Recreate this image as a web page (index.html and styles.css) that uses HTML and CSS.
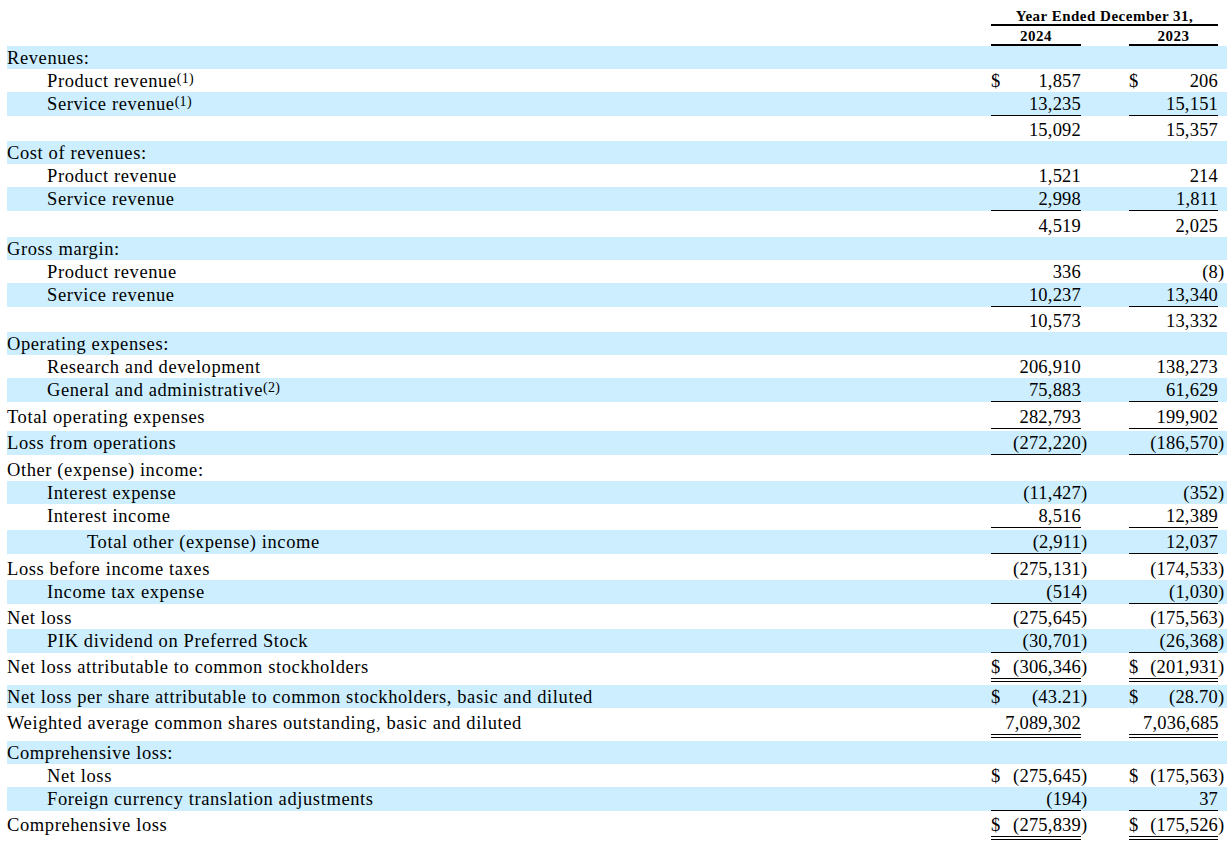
FILE: index.html
```html
<!DOCTYPE html>
<html lang="en">
<head>
<meta charset="utf-8">
<title>Statements of Operations and Comprehensive Loss</title>
<link rel="stylesheet" href="styles.css">
</head>
<body>
<table class="fin">
  <colgroup>
    <col class="c-label">
    <col class="c-dol">
    <col class="c-num1">
    <col class="c-par">
    <col class="c-gap">
    <col class="c-dol">
    <col class="c-num2">
    <col class="c-par2">
  </colgroup>
  <thead>
    <tr class="h1">
      <td></td>
      <td colspan="6" class="hd hd-top">Year Ended December 31,</td>
      <td></td>
    </tr>
    <tr class="h2">
      <td></td>
      <td colspan="2" class="hd hd-yr">2024</td>
      <td></td>
      <td></td>
      <td colspan="2" class="hd hd-yr">2023</td>
      <td></td>
    </tr>
  </thead>
  <tbody>
    <tr class="b"><td class="l0">Revenues:</td><td class="d"></td><td class="n"></td><td class="p"></td><td></td><td class="d"></td><td class="n"></td><td class="p"></td></tr>
    <tr><td class="l1">Product revenue<span class="fn">(1)</span></td><td class="d">$</td><td class="n">1,857</td><td class="p"></td><td></td><td class="d">$</td><td class="n">206</td><td class="p"></td></tr>
    <tr class="b ul"><td class="l1">Service revenue<span class="fn">(1)</span></td><td class="d"></td><td class="n">13,235</td><td class="p"></td><td></td><td class="d"></td><td class="n">15,151</td><td class="p"></td></tr>
    <tr class="sp2"><td class="l0"></td><td class="d"></td><td class="n">15,092</td><td class="p"></td><td></td><td class="d"></td><td class="n">15,357</td><td class="p"></td></tr>

    <tr class="b"><td class="l0">Cost of revenues:</td><td class="d"></td><td class="n"></td><td class="p"></td><td></td><td class="d"></td><td class="n"></td><td class="p"></td></tr>
    <tr><td class="l1">Product revenue</td><td class="d"></td><td class="n">1,521</td><td class="p"></td><td></td><td class="d"></td><td class="n">214</td><td class="p"></td></tr>
    <tr class="b ul"><td class="l1">Service revenue</td><td class="d"></td><td class="n">2,998</td><td class="p"></td><td></td><td class="d"></td><td class="n">1,811</td><td class="p"></td></tr>
    <tr class="sp3"><td class="l0"></td><td class="d"></td><td class="n">4,519</td><td class="p"></td><td></td><td class="d"></td><td class="n">2,025</td><td class="p"></td></tr>

    <tr class="b"><td class="l0">Gross margin:</td><td class="d"></td><td class="n"></td><td class="p"></td><td></td><td class="d"></td><td class="n"></td><td class="p"></td></tr>
    <tr><td class="l1">Product revenue</td><td class="d"></td><td class="n">336</td><td class="p"></td><td></td><td class="d"></td><td class="n">(8</td><td class="p">)</td></tr>
    <tr class="b ul"><td class="l1">Service revenue</td><td class="d"></td><td class="n">10,237</td><td class="p"></td><td></td><td class="d"></td><td class="n">13,340</td><td class="p"></td></tr>
    <tr class="sp2"><td class="l0"></td><td class="d"></td><td class="n">10,573</td><td class="p"></td><td></td><td class="d"></td><td class="n">13,332</td><td class="p"></td></tr>

    <tr class="b"><td class="l0">Operating expenses:</td><td class="d"></td><td class="n"></td><td class="p"></td><td></td><td class="d"></td><td class="n"></td><td class="p"></td></tr>
    <tr><td class="l1">Research and development</td><td class="d"></td><td class="n">206,910</td><td class="p"></td><td></td><td class="d"></td><td class="n">138,273</td><td class="p"></td></tr>
    <tr class="b ul"><td class="l1">General and administrative<span class="fn">(2)</span></td><td class="d"></td><td class="n">75,883</td><td class="p"></td><td></td><td class="d"></td><td class="n">61,629</td><td class="p"></td></tr>
    <tr class="sp3 ul"><td class="l0">Total operating expenses</td><td class="d"></td><td class="n">282,793</td><td class="p"></td><td></td><td class="d"></td><td class="n">199,902</td><td class="p"></td></tr>
    <tr class="b sp2 ul"><td class="l0">Loss from operations</td><td class="d"></td><td class="n">(272,220</td><td class="p">)</td><td></td><td class="d"></td><td class="n">(186,570</td><td class="p">)</td></tr>

    <tr class="sp3"><td class="l0">Other (expense) income:</td><td class="d"></td><td class="n"></td><td class="p"></td><td></td><td class="d"></td><td class="n"></td><td class="p"></td></tr>
    <tr class="b"><td class="l1">Interest expense</td><td class="d"></td><td class="n">(11,427</td><td class="p">)</td><td></td><td class="d"></td><td class="n">(352</td><td class="p">)</td></tr>
    <tr class="ul"><td class="l1">Interest income</td><td class="d"></td><td class="n">8,516</td><td class="p"></td><td></td><td class="d"></td><td class="n">12,389</td><td class="p"></td></tr>
    <tr class="b sp2 ul"><td class="l2">Total other (expense) income</td><td class="d"></td><td class="n">(2,911</td><td class="p">)</td><td></td><td class="d"></td><td class="n">12,037</td><td class="p"></td></tr>

    <tr class="sp3"><td class="l0">Loss before income taxes</td><td class="d"></td><td class="n">(275,131</td><td class="p">)</td><td></td><td class="d"></td><td class="n">(174,533</td><td class="p">)</td></tr>
    <tr class="b ul"><td class="l1">Income tax expense</td><td class="d"></td><td class="n">(514</td><td class="p">)</td><td></td><td class="d"></td><td class="n">(1,030</td><td class="p">)</td></tr>
    <tr class="sp2"><td class="l0">Net loss</td><td class="d"></td><td class="n">(275,645</td><td class="p">)</td><td></td><td class="d"></td><td class="n">(175,563</td><td class="p">)</td></tr>
    <tr class="b ul"><td class="l1">PIK dividend on Preferred Stock</td><td class="d"></td><td class="n">(30,701</td><td class="p">)</td><td></td><td class="d"></td><td class="n">(26,368</td><td class="p">)</td></tr>
    <tr class="sp2 dbl"><td class="l0">Net loss attributable to common stockholders</td><td class="d">$</td><td class="n">(306,346</td><td class="p">)</td><td></td><td class="d">$</td><td class="n">(201,931</td><td class="p">)</td></tr>
    <tr class="b sp3"><td class="l0">Net loss per share attributable to common stockholders, basic and diluted</td><td class="d">$</td><td class="n">(43.21</td><td class="p">)</td><td></td><td class="d">$</td><td class="n">(28.70</td><td class="p">)</td></tr>
    <tr class="sp3 dbl"><td class="l0">Weighted average common shares outstanding, basic and diluted</td><td class="d"></td><td class="n">7,089,302</td><td class="p"></td><td></td><td class="d"></td><td class="n">7,036,685</td><td class="p"></td></tr>

    <tr class="b sp3"><td class="l0">Comprehensive loss:</td><td class="d"></td><td class="n"></td><td class="p"></td><td></td><td class="d"></td><td class="n"></td><td class="p"></td></tr>
    <tr><td class="l1">Net loss</td><td class="d">$</td><td class="n">(275,645</td><td class="p">)</td><td></td><td class="d">$</td><td class="n">(175,563</td><td class="p">)</td></tr>
    <tr class="b ul"><td class="l1">Foreign currency translation adjustments</td><td class="d"></td><td class="n">(194</td><td class="p">)</td><td></td><td class="d"></td><td class="n">37</td><td class="p"></td></tr>
    <tr class="sp2 dbl"><td class="l0">Comprehensive loss</td><td class="d">$</td><td class="n">(275,839</td><td class="p">)</td><td></td><td class="d">$</td><td class="n">(175,526</td><td class="p">)</td></tr>
  </tbody>
</table>
</body>
</html>
```
FILE: styles.css
```css
html, body {
  margin: 0;
  padding: 0;
  background: #ffffff;
  overflow: hidden;
}

body {
  font-family: "Liberation Serif", "Times New Roman", serif;
  font-size: 18.5px;
  color: #000000;
}

.fin {
  margin-left: 7px;
  width: 1220px;
  table-layout: fixed;
  border-collapse: separate;
  border-spacing: 0;
}

.c-label { width: 984px; }
.c-dol { width: 14px; }
.c-num1 { width: 76px; }
.c-par { width: 8px; }
.c-gap { width: 40px; }
.c-num2 { width: 75px; }
.c-par2 { width: 9px; }

.fin td {
  padding: 2px 0 0 0;
  line-height: 21px;
  letter-spacing: 0.6px;
  vertical-align: top;
  white-space: nowrap;
  background-clip: padding-box;
}

.fin td.n {
  letter-spacing: 0.2px;
}
.fin td.p,
.fin td.d {
  letter-spacing: 0;
}

/* header */
.fin .hd {
  font-size: 15px;
  font-weight: bold;
  text-align: center;
  line-height: 16px;
  letter-spacing: 0.5px;
}
.fin .hd-top {
  padding-top: 8px;
  border-bottom: 2px solid #000;
}
.fin .hd-yr {
  padding-top: 2px;
  border-bottom: 2px solid #000;
}

/* body rows */
.b td { background-color: #cceeff; }

.fin .l1 { padding-left: 40px; }
.fin .l2 { padding-left: 80px; }

.d { text-align: left; }
.n { text-align: right; }
.p { text-align: left; }

.fn {
  font-size: 14px;
  line-height: 0;
  letter-spacing: 0.3px;
  vertical-align: 4px;
}

.sp1 td { border-top: 1px solid transparent; }
.sp2 td { border-top: 2px solid transparent; }
.sp3 td { border-top: 3px solid transparent; }

.ul .d, .ul .n { border-bottom: 1px solid #000; }
.dbl .d, .dbl .n { border-bottom: 4px double #000; }
```
